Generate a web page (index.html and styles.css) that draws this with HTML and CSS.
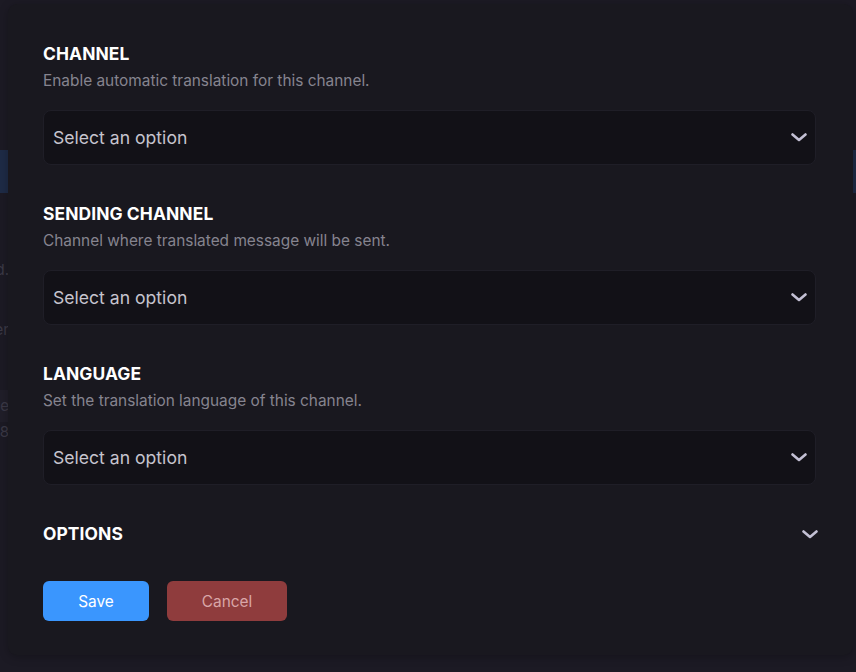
FILE: index.html
```html
<!DOCTYPE html>
<html lang="en">
<head>
<meta charset="utf-8">
<title>Translation settings</title>
<link rel="stylesheet" href="styles.css">
</head>
<body>
<div class="page">
  <div class="page-bar"></div>
  <div class="page-lines">
    <div class="page-line l1"><span>has been enabled.</span></div>
    <div class="page-line l2"><span>translated for every user</span></div>
    <div class="page-line l3 band"><span>select the language of the channe</span></div>
    <div class="page-line l4"><span>Last updated 2023-08-18</span></div>
  </div>
</div>

<div class="modal">
  <section class="field">
    <h2 class="field-title">CHANNEL</h2>
    <p class="field-desc">Enable automatic translation for this channel.</p>
    <div class="select">
      <span class="select-text">Select an option</span>
      <svg class="chev" width="16" height="9" viewBox="0 0 16 9"><polyline points="1.5,1.5 8,7 14.5,1.5" fill="none" stroke="currentColor" stroke-width="2.6" stroke-linecap="round" stroke-linejoin="round"/></svg>
    </div>
  </section>

  <section class="field">
    <h2 class="field-title">SENDING CHANNEL</h2>
    <p class="field-desc">Channel where translated message will be sent.</p>
    <div class="select">
      <span class="select-text">Select an option</span>
      <svg class="chev" width="16" height="9" viewBox="0 0 16 9"><polyline points="1.5,1.5 8,7 14.5,1.5" fill="none" stroke="currentColor" stroke-width="2.6" stroke-linecap="round" stroke-linejoin="round"/></svg>
    </div>
  </section>

  <section class="field">
    <h2 class="field-title">LANGUAGE</h2>
    <p class="field-desc">Set the translation language of this channel.</p>
    <div class="select">
      <span class="select-text">Select an option</span>
      <svg class="chev" width="16" height="9" viewBox="0 0 16 9"><polyline points="1.5,1.5 8,7 14.5,1.5" fill="none" stroke="currentColor" stroke-width="2.6" stroke-linecap="round" stroke-linejoin="round"/></svg>
    </div>
  </section>

  <div class="options">
    <h2 class="field-title">OPTIONS</h2>
    <svg class="chev" width="16" height="9" viewBox="0 0 16 9"><polyline points="1.5,1.5 8,7 14.5,1.5" fill="none" stroke="currentColor" stroke-width="2.6" stroke-linecap="round" stroke-linejoin="round"/></svg>
  </div>

  <div class="actions">
    <button class="btn btn-save">Save</button>
    <button class="btn btn-cancel">Cancel</button>
  </div>
</div>
</body>
</html>
```

FILE: styles.css
```css
* { box-sizing: border-box; }

html, body {
  margin: 0;
  padding: 0;
  height: 100%;
}

body {
  background: #1c1a24;
  font-family: Inter, "Noto Sans", sans-serif;
  overflow: hidden;
  position: relative;
}

/* dimmed page behind the modal */
.page {
  padding-top: 150px;
}

.page-bar {
  height: 43px;
  background: #1e2b46;
}

.page-lines {
  display: flex;
  flex-direction: column;
  width: 9px;
  overflow: hidden;
  color: #3b3946;
  font-size: 15px;
  line-height: 20px;
}

.page-line {
  display: flex;
  justify-content: flex-end;
  white-space: nowrap;
}

.page-line span { flex: none; }

.l1 { margin-top: 67px; }
.l2 { margin-top: 40px; }
.l3 { margin-top: 50px; padding: 6px 0; background: #201e29; }
.l4 { margin-top: 0; }

/* modal overlay */
.modal {
  position: absolute;
  left: 8px;
  top: 4px;
  width: 845px;
  height: 651px;
  background: #19181f;
  border-radius: 9px;
  padding: 38px 36px 0 35px;
  box-shadow: 0 2px 10px rgba(0, 0, 0, 0.25);
}

.field {
  margin-bottom: 37px;
}

.field-title {
  margin: 0;
  font-size: 17.4px;
  font-weight: 700;
  line-height: 24px;
  color: #ffffff;
  letter-spacing: 0.1px;
}

.field-desc {
  margin: 5px 0 0;
  font-size: 15.4px;
  line-height: 20px;
  color: #86848f;
}

.select {
  margin-top: 19px;
  height: 55px;
  width: 773px;
  background: #121117;
  border: 1px solid #1f1e27;
  border-radius: 8px;
  display: flex;
  align-items: center;
  justify-content: space-between;
  padding: 0 8px 0 9px;
}

.select-text {
  font-size: 17.6px;
  color: #c6c4ce;
}

.chev {
  color: #c3c0d4;
  display: block;
}

.options {
  margin-top: 3px;
  width: 775px;
  display: flex;
  align-items: center;
  justify-content: space-between;
}

.actions {
  margin-top: 35px;
  display: flex;
  gap: 18px;
}

.btn {
  height: 40px;
  border: none;
  border-radius: 6px;
  font-family: Inter, "Noto Sans", sans-serif;
  font-size: 15.4px;
  padding: 0;
}

.btn-save {
  width: 106px;
  background: #3a96fe;
  color: #ffffff;
}

.btn-cancel {
  width: 120px;
  background: #8f3c3d;
  color: #d9a6a8;
}
```
